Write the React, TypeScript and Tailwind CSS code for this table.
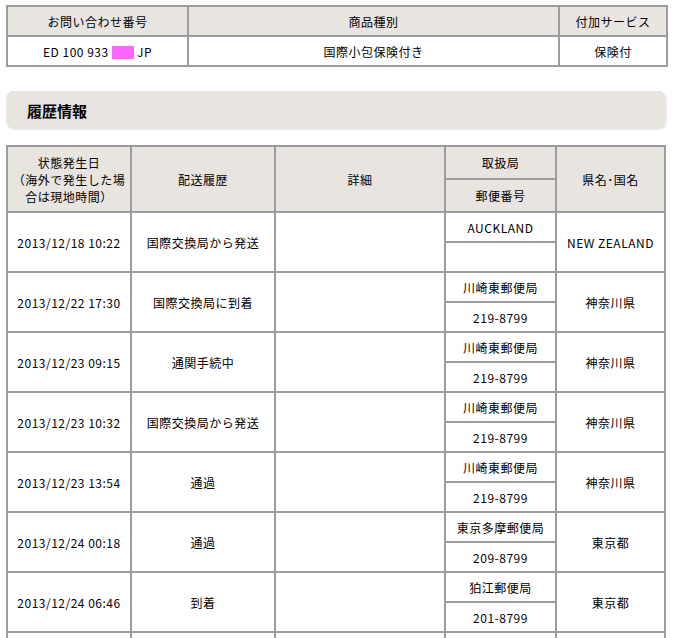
import React from 'react';

type Row = {
  date: string;
  status: string;
  office: string;
  zip: string;
  pref: string;
};

const rows: Row[] = [
  { date: '2013/12/18 10:22', status: '国際交換局から発送', office: 'AUCKLAND', zip: '', pref: 'NEW ZEALAND' },
  { date: '2013/12/22 17:30', status: '国際交換局に到着', office: '川崎東郵便局', zip: '219-8799', pref: '神奈川県' },
  { date: '2013/12/23 09:15', status: '通関手続中', office: '川崎東郵便局', zip: '219-8799', pref: '神奈川県' },
  { date: '2013/12/23 10:32', status: '国際交換局から発送', office: '川崎東郵便局', zip: '219-8799', pref: '神奈川県' },
  { date: '2013/12/23 13:54', status: '通過', office: '川崎東郵便局', zip: '219-8799', pref: '神奈川県' },
  { date: '2013/12/24 00:18', status: '通過', office: '東京多摩郵便局', zip: '209-8799', pref: '東京都' },
  { date: '2013/12/24 06:46', status: '到着', office: '狛江郵便局', zip: '201-8799', pref: '東京都' },
  // next row only shows its top edge in the frame
  { date: '', status: '', office: '', zip: '', pref: '' },
];

const cell = 'border-r-2 border-b-2 border-[#9c9c9c] p-0 text-center align-middle';
const head = cell + ' bg-[#e8e4e0] font-normal';

export default function App() {
  return (
    <div
      className="min-h-[638px] bg-white pl-[6px] pt-[5px] text-[12px] leading-[17px] text-black tracking-[0.5px]"
      style={{ fontFamily: '"Noto Sans CJK JP", "Noto Sans", sans-serif' }}
    >
      {/* 問い合わせ番号 */}
      <table className="table-fixed border-separate border-spacing-0 border-l-2 border-t-2 border-[#9c9c9c] w-[662px]">
        <colgroup>
          <col className="w-[181px]" />
          <col className="w-[371px]" />
          <col className="w-[108px]" />
        </colgroup>
        <tbody>
          <tr>
            <th className={head + ' h-[30px]'}>お問い合わせ番号</th>
            <th className={head}>商品種別</th>
            <th className={head}>付加サービス</th>
          </tr>
          <tr>
            <td className={cell + ' h-[30px]'}>
              ED 100 933 <span className="inline-block w-[22px] h-[13px] bg-[#ff66ff] align-[-2px]" /> JP
            </td>
            <td className={cell}>国際小包保険付き</td>
            <td className={cell}>保険付</td>
          </tr>
        </tbody>
      </table>

      <div className="mt-[24px] mb-[16px] w-[660px] h-[38px] rounded-[8px] bg-[#e8e4e0] shadow-[1px_1px_1px_rgba(0,0,0,0.08)] flex items-center pl-[21px]">
        <h2 className="text-[15px] font-bold tracking-normal">履歴情報</h2>
      </div>

      {/* 履歴 */}
      <table className="table-fixed border-separate border-spacing-0 border-l-2 border-t-2 border-[#9c9c9c] w-[660px]">
        <colgroup>
          <col className="w-[124px]" />
          <col className="w-[144px]" />
          <col className="w-[170px]" />
          <col className="w-[111px]" />
          <col className="w-[109px]" />
        </colgroup>
        <tbody>
          <tr>
            <th rowSpan={2} className={head}>
              状態発生日
              <br />
              （海外で発生した場
              <br />
              合は現地時間）
            </th>
            <th rowSpan={2} className={head}>配送履歴</th>
            <th rowSpan={2} className={head}>詳細</th>
            <th className={head + ' h-[33px]'}>取扱局</th>
            <th rowSpan={2} className={head}>県名･国名</th>
          </tr>
          <tr>
            <th className={head + ' h-[33px]'}>郵便番号</th>
          </tr>
          {rows.map((r, i) => (
            <React.Fragment key={i}>
              <tr>
                <td rowSpan={2} className={cell}>{r.date}</td>
                <td rowSpan={2} className={cell}>{r.status}</td>
                <td rowSpan={2} className={cell}></td>
                <td className={cell + ' h-[30px]'}>{r.office}</td>
                <td rowSpan={2} className={cell}>{r.pref}</td>
              </tr>
              <tr>
                <td className={cell + ' h-[30px]'}>{r.zip}</td>
              </tr>
            </React.Fragment>
          ))}
        </tbody>
      </table>
    </div>
  );
}
